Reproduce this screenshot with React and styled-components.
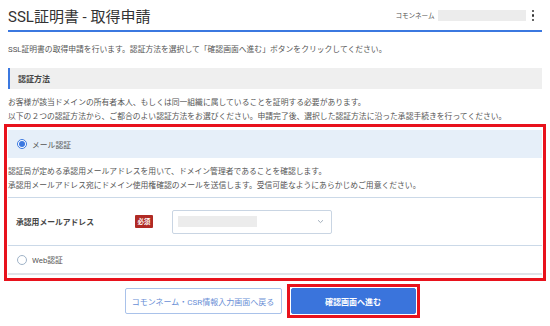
import React from 'react'
import styled, { createGlobalStyle } from 'styled-components'

const GlobalStyle = createGlobalStyle`
  body {
    margin: 0;
    padding: 0 8px;
    background: #fff;
    font-family: Roboto, "Noto Sans CJK JP", sans-serif;
    color: #444;
  }
`

const Page = styled.div`
  width: 534px;
`

const Header = styled.header`
  display: flex;
  align-items: center;
  justify-content: space-between;
  box-sizing: border-box;
  height: 32px;
  padding-top: 1px;
  border-bottom: 2px solid #3b78e0;
`

const Title = styled.h1`
  margin: 0;
  font-size: 15px;
  font-weight: 400;
  color: #333;
`

const HeaderRight = styled.div`
  display: flex;
  align-items: center;
  font-size: 6.6px;
  color: #555;

  > span.label { margin-right: 3px; }
`

const Blank = styled.div`
  width: ${p => p.w}px;
  height: ${p => p.h}px;
  background: #ececec;
`

const Kebab = styled.div`
  display: flex;
  flex-direction: column;
  gap: 2px;
  margin: 0 8px 0 6px;

  > i {
    display: block;
    width: 2.4px;
    height: 2.4px;
    border-radius: 50%;
    background: #333;
  }
`

const Text = styled.p`
  margin: 0;
  font-size: 7.8px;
  line-height: 14px;
  color: #555;
`

const Intro = styled(Text)`
  margin: 11px 0 11px;
`

const SectionHeading = styled.h2`
  margin: 0;
  height: 21px;
  display: flex;
  align-items: center;
  padding-left: 8px;
  border-left: 2px solid #3b78e0;
  background: #efefef;
  font-size: 8px;
  font-weight: 700;
  color: #444;
`

const Lead = styled(Text)`
  margin: 7px 0 0;
`

const Highlight = styled.div`
  margin: 0 -4px;
  padding: 3px 1px 3px;
  border: 3px solid #e8121c;
`

const OptionHead = styled.label`
  display: flex;
  align-items: center;
  height: ${p => (p.active ? 28 : 27)}px;
  padding-left: 9px;
  background: ${p => (p.active ? '#e6eff9' : '#fff')};
  font-size: 7.8px;
  color: #555;
  border-bottom: ${p => (p.last ? '2px solid #dfe3e8' : 'none')};
`

const Radio = styled.span`
  width: 10px;
  height: 10px;
  margin-right: 5px;
  border-radius: 50%;
  box-sizing: border-box;
  border: 1px solid ${p => (p.checked ? '#3b78e0' : '#9fb3c8')};
  display: flex;
  align-items: center;
  justify-content: center;
  background: #fff;

  &::after {
    content: '';
    display: ${p => (p.checked ? 'block' : 'none')};
    width: 6px;
    height: 6px;
    border-radius: 50%;
    background: #3b78e0;
  }
`

const OptionBody = styled.div`
  padding: 7px 0 4px;
  border-bottom: 1px solid #cbd9e8;
`

const FieldRow = styled.div`
  display: grid;
  grid-template-columns: 119px 37px 160px;
  align-items: center;
  height: 47px;
  padding-left: 8px;
  border-bottom: 1px solid #cbd9e8;
`

const FieldLabel = styled.span`
  font-size: 7.8px;
  font-weight: 700;
  color: #444;
`

const Required = styled.span`
  justify-self: start;
  padding: 2px 2.5px;
  background: #b02a24;
  color: #fff;
  font-size: 6.4px;
  font-weight: 700;
  border-radius: 1px;
`

const Select = styled.div`
  display: flex;
  align-items: center;
  justify-content: space-between;
  height: 24px;
  box-sizing: border-box;
  padding: 0 7px 0 5px;
  border: 1px solid #c9d5e3;
  border-radius: 2px;
  background: #fff;
`

const Actions = styled.div`
  display: flex;
  justify-content: center;
  align-items: center;
  gap: 5px;
  margin-top: 3px;
  padding-right: 6px;
`

const Button = styled.button`
  height: 26px;
  box-sizing: border-box;
  padding: 0;
  width: ${p => p.w}px;
  border-radius: 2px;
  font-family: inherit;
  font-size: 8px;
  font-weight: ${p => (p.primary ? 700 : 400)};
  color: ${p => (p.primary ? '#fff' : '#6a8fd6')};
  background: ${p => (p.primary ? '#3a74dc' : '#fff')};
  border: 1px solid ${p => (p.primary ? '#3a74dc' : '#a9c2ea')};
`

const Marked = styled.div`
  display: flex;
  padding: 1px;
  border: 3px solid #e8121c;
`

const App = () => (
  <Page>
    <GlobalStyle />
    <Header>
      <Title>SSL証明書 - 取得申請</Title>
      <HeaderRight>
        <span className='label'>コモンネーム</span>
        <Blank w={88} h={11} />
        <Kebab><i /><i /><i /></Kebab>
      </HeaderRight>
    </Header>

    <Intro>SSL証明書の取得申請を行います。認証方法を選択して「確認画面へ進む」ボタンをクリックしてください。</Intro>

    <SectionHeading>認証方法</SectionHeading>
    <Lead>
      お客様が該当ドメインの所有者本人、もしくは同一組織に属していることを証明する必要があります。<br />
      以下の２つの認証方法から、ご都合のよい認証方法をお選びください。申請完了後、選択した認証方法に沿った承認手続きを行ってください。
    </Lead>

    <Highlight>
      <OptionHead active>
        <Radio checked />
        メール認証
      </OptionHead>
      <OptionBody>
        <Text>
          認証局が定める承認用メールアドレスを用いて、ドメイン管理者であることを確認します。<br />
          承認用メールアドレス宛にドメイン使用権確認のメールを送信します。受信可能なようにあらかじめご用意ください。
        </Text>
      </OptionBody>
      <FieldRow>
        <FieldLabel>承認用メールアドレス</FieldLabel>
        <Required>必須</Required>
        <Select>
          <Blank w={79} h={11} />
          <svg width='7' height='5' viewBox='0 0 7 5'>
            <path d='M1 1.2 L3.5 3.6 L6 1.2' fill='none' stroke='#9aa7b6' strokeWidth='0.9' />
          </svg>
        </Select>
      </FieldRow>
      <OptionHead last>
        <Radio />
        Web認証
      </OptionHead>
    </Highlight>

    <Actions>
      <Button w={157}>コモンネーム・CSR情報入力画面へ戻る</Button>
      <Marked>
        <Button primary w={125}>確認画面へ進む</Button>
      </Marked>
    </Actions>
  </Page>
)

export default App
